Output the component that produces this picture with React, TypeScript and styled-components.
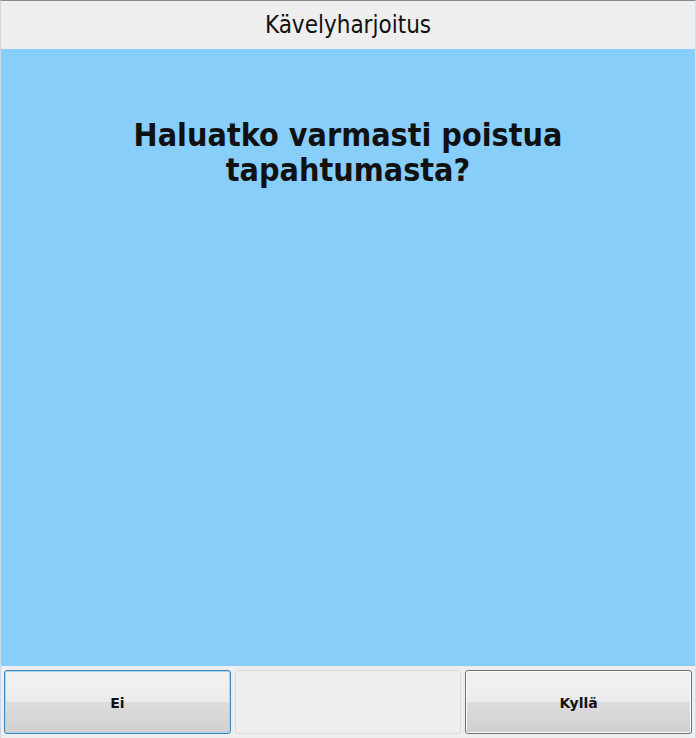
import styled, {createGlobalStyle} from 'styled-components'

const GlobalStyle = createGlobalStyle`
    html, body {
        margin: 0;
        padding: 0;
        background: #eeeeee;
    }
`

export default function App() {
    return (
        <>
            <GlobalStyle />
            <Window>
                <Header>Kävelyharjoitus</Header>
                <Content>
                    <Question>Haluatko varmasti poistua tapahtumasta?</Question>
                </Content>
                <ButtonBar>
                    <Button focused>Ei</Button>
                    <Spacer />
                    <Button>Kyllä</Button>
                </ButtonBar>
            </Window>
        </>
    )
}

const Window = styled.div`
    width: 696px;
    height: 738px;
    box-sizing: border-box;
    display: flex;
    flex-direction: column;
    border-top: 1px solid #8a8a8a;
    border-left: 1px solid #c9d9e6;
    border-right: 1px solid #d8dfe6;
    background: #eeeeee;
    font-family: 'DejaVu Sans Condensed', 'DejaVu Sans', sans-serif;
`

const Header = styled.div`
    height: 48px;
    display: flex;
    align-items: center;
    justify-content: center;
    font-size: 24px;
    color: #111;
    background: #eeeeee;
`

const Content = styled.div`
    flex: 1;
    background: #87cefa;
    padding-top: 69px;
`

const Question = styled.h1`
    margin: 0 auto;
    width: 480px;
    text-align: center;
    font-size: 32px;
    line-height: 35px;
    font-weight: bold;
    color: #111;
`

const ButtonBar = styled.div`
    height: 72px;
    box-sizing: border-box;
    padding: 4px 3px 4px 3px;
    display: grid;
    grid-template-columns: 1fr 1fr 1fr;
    gap: 4px;
    background: #eeeeee;
`

const Button = styled.button<{focused?: boolean}>`
    border: 1px solid ${(p) => (p.focused ? '#3d86b5' : '#707070')};
    border-radius: 3px;
    padding-top: 2px;
    background: linear-gradient(to bottom, #f2f2f2 0%, #ebebeb 50%, #dddddd 50%, #d0d0d0 100%);
    font-family: 'DejaVu Sans', sans-serif;
    font-weight: bold;
    font-size: 14px;
    color: #111;
    box-shadow: ${(p) => (p.focused ? 'inset 0 0 0 1px #a9d6f0' : 'inset 0 0 0 1px #fcfcfc')};
`

const Spacer = styled.div`
    border: 1px solid #dcdcdc;
    border-radius: 2px;
    background: #efefef;
`
